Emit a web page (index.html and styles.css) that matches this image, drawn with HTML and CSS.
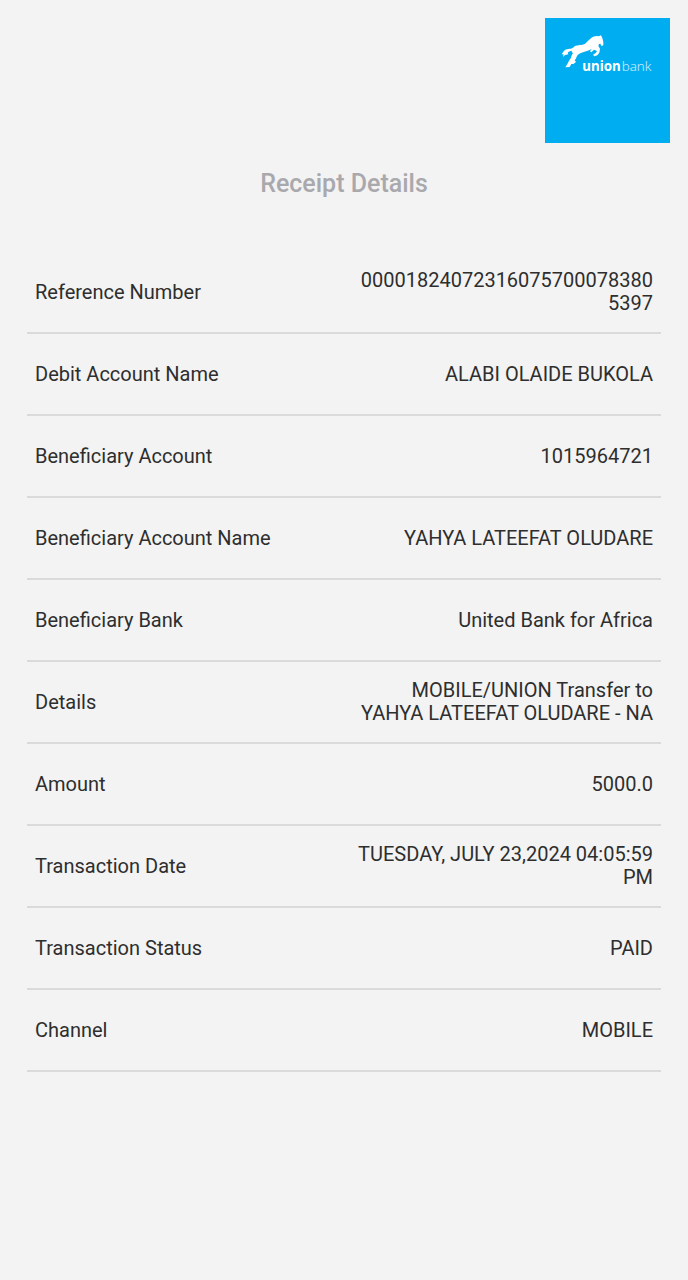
FILE: index.html
```html
<!DOCTYPE html>
<html lang="en">
  <head>
    <meta charset="UTF-8">
    <meta name="viewport" content="width=device-width, initial-scale=1.0">
    <title>Receipt Details</title>
    <link rel="stylesheet" href="styles.css">
  </head>
  <body>
    <header class="header">
      <!-- Union Bank logo -->
      <svg class="logo" viewBox="0 0 375 375" role="img" aria-label="Union Bank">
        <rect width="375" height="375" fill="#00adf0"/>
        <path fill="#fff" d="M168 52 L172 60 L175 72 L175 81 L170 85 L166 77 L162 78 L160 84 L165 92 L163 104 L157 112 L148 115 L144 110 L153 104 L156 99 L147 95 L139 103 L135 100 L140 93 C127 100 114 101 103 107 C96 111 94 117 93 122 L89 127 L93 132 L85 138 L79 138 L74 147 L61 148 L67 138 L73 127 L78 119 C79 113 82 109 84 105 C80 102 80 100 80 98 C75 99 71 100 68 104 L70 109 L60 111 L54 117 L56 109 L50 109 L56 100 C64 89 76 95 84 89 C94 78 107 84 119 78 C130 70 139 54 156 54 L161 55 Z"/>
        <text class="logo-union" x="112" y="158">union</text>
        <text class="logo-bank" x="230" y="158">bank</text>
      </svg>
    </header>

    <main>
      <h1>Receipt Details</h1>

      <dl class="details">
        <div class="row">
          <dt>Reference Number</dt>
          <dd>000018240723160757000783805397</dd>
        </div>
        <div class="row">
          <dt>Debit Account Name</dt>
          <dd>ALABI OLAIDE BUKOLA</dd>
        </div>
        <div class="row">
          <dt>Beneficiary Account</dt>
          <dd>1015964721</dd>
        </div>
        <div class="row">
          <dt>Beneficiary Account Name</dt>
          <dd>YAHYA LATEEFAT OLUDARE</dd>
        </div>
        <div class="row">
          <dt>Beneficiary Bank</dt>
          <dd>United Bank for Africa</dd>
        </div>
        <div class="row">
          <dt>Details</dt>
          <dd>MOBILE/UNION Transfer to YAHYA LATEEFAT OLUDARE - NA</dd>
        </div>
        <div class="row">
          <dt>Amount</dt>
          <dd>5000.0</dd>
        </div>
        <div class="row">
          <dt>Transaction Date</dt>
          <dd>TUESDAY, JULY 23,2024 04:05:59 PM</dd>
        </div>
        <div class="row">
          <dt>Transaction Status</dt>
          <dd>PAID</dd>
        </div>
        <div class="row">
          <dt>Channel</dt>
          <dd>MOBILE</dd>
        </div>
      </dl>
    </main>
  </body>
</html>
```
FILE: styles.css
```css
body {
    margin: 0;
    background-color: #f3f3f3;
    color: #2e2e2e;
    font-family: Roboto, "Noto Sans", sans-serif;
    font-size: 20px;
    line-height: 23px;
}
.header {
    display: flex;
    justify-content: flex-end;
    padding: 18px 18px 0;
}
.logo {
    display: block;
    width: 125px;
    height: 125px;
}
.logo text {
    fill: #fff;
}
.logo-union {
    font-family: "Noto Sans", sans-serif;
    font-size: 40px;
    font-weight: bold;
}
.logo-bank {
    font-family: "Noto Sans", sans-serif;
    font-size: 40px;
    font-weight: 300;
    opacity: 0.8;
}
h1 {
    margin: 25px 0 52px;
    color: #a9a9ad;
    font-size: 25px;
    font-weight: 500;
    line-height: 32px;
    text-align: center;
}
.details {
    margin: 0 27px;
}
.row {
    display: flex;
    align-items: center;
    justify-content: space-between;
    min-height: 80px;
    padding: 0 8px;
    border-bottom: 2px solid #dadada;
}
dd {
    width: 49%;
    margin: 0;
    text-align: right;
    overflow-wrap: anywhere;
}
```
